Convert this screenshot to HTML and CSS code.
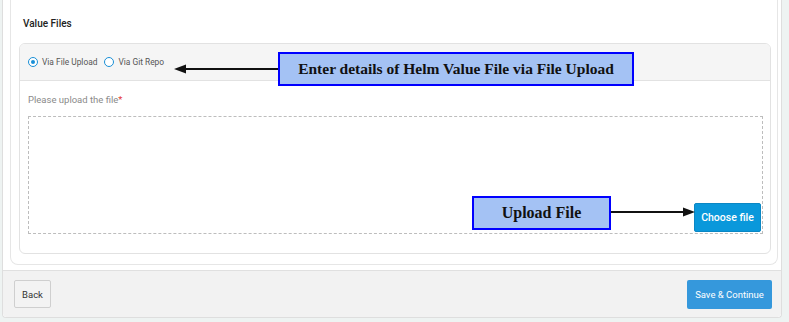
FILE: index.html
```html
<!DOCTYPE html>
<html lang="en">
  <head>
    <meta charset="UTF-8" />
    <title>Helm Value Files</title>
    <link rel="stylesheet" href="styles.css">
  </head>
  <body>
    <div class="page">
      <div class="wizard">
        <div class="panel">
          <h4 class="panel__title">Value Files</h4>
          <div class="card">
            <div class="card__head">
              <label class="radio"><span class="radio__dot radio__dot--on"></span>Via File Upload</label>
              <label class="radio"><span class="radio__dot"></span>Via Git Repo</label>
            </div>
            <div class="card__body">
              <p class="field-label">Please upload the file<span class="req">*</span></p>
              <div class="dropzone">
                <button class="btn-choose">Choose file</button>
              </div>
            </div>
          </div>
        </div>
        <div class="wizard__foot">
          <button class="btn-back">Back</button>
          <button class="btn-save">Save &amp; Continue</button>
        </div>
      </div>

      <!-- annotations laid over the screenshot -->
      <div class="note note--top">Enter details of Helm Value File via File Upload</div>
      <svg class="arrow arrow--top" width="106" height="10" viewBox="0 0 106 10">
        <line x1="104" y1="5" x2="10" y2="5" stroke="#111" stroke-width="2" />
        <polygon points="0,5 12,0.5 12,9.5" fill="#111" />
      </svg>
      <div class="note note--file">Upload File</div>
      <svg class="arrow arrow--file" width="84" height="10" viewBox="0 0 84 10">
        <line x1="0" y1="5" x2="72" y2="5" stroke="#111" stroke-width="2" />
        <polygon points="84,5 72,0.5 72,9.5" fill="#111" />
      </svg>
    </div>
  </body>
</html>
```

FILE: styles.css
```css
html {
  box-sizing: border-box;
}

*,
*::before,
*::after {
  margin: 0;
  padding: 0;
  box-sizing: inherit;
}

body {
  font-family: "Roboto", "Liberation Sans", sans-serif;
  background: #eef3f2;
  color: #333;
  height: 322px;
  overflow: hidden;
}

.page {
  position: relative;
  padding: 0 7px 0 2px;
}

.wizard {
  background: #fff;
  border: 1px solid #dedede;
  border-top: none;
  border-radius: 0 0 4px 4px;
  height: 318px;
  display: flex;
  flex-direction: column;
}

.panel {
  margin: 0 3px 0 7px;
  height: 265px;
  border: 1px solid #e6e6e6;
  border-top: none;
  border-radius: 0 0 8px 8px;
  padding: 17px 6px 0 8px;
}

.panel__title {
  font-size: 10px;
  font-weight: 500;
  color: #222;
  line-height: 14px;
  margin-left: 4px;
}

.card {
  margin-top: 12px;
  border: 1px solid #e2e2e2;
  border-radius: 6px;
  height: 211px;
  overflow: hidden;
}

.card__head {
  height: 37px;
  background: #f5f5f5;
  border-bottom: 1px solid #e2e2e2;
  display: flex;
  align-items: center;
  gap: 7px;
  padding-left: 8px;
}

.radio {
  display: flex;
  align-items: center;
  gap: 4px;
  font-size: 8.4px;
  color: #555;
}

.radio__dot {
  width: 10px;
  height: 10px;
  border: 1.5px solid #1a8fd6;
  border-radius: 50%;
  background: #fff;
  position: relative;
}

.radio__dot--on::after {
  content: "";
  position: absolute;
  left: 1.5px;
  top: 1.5px;
  width: 4px;
  height: 4px;
  border-radius: 50%;
  background: #1a8fd6;
}

.card__body {
  padding: 13px 7px 0 8px;
}

.field-label {
  font-size: 9.5px;
  color: #8a8a8a;
  line-height: 12px;
}

.req {
  color: #e53935;
}

.dropzone {
  margin-top: 10px;
  height: 118px;
  border: 1px dashed #bdbdbd;
  display: flex;
  justify-content: flex-end;
  align-items: flex-end;
  padding: 0 1px 1px 0;
}

.btn-choose {
  width: 67px;
  height: 29px;
  border: 1px solid #0b87c4;
  border-radius: 2px;
  background: #0a98db;
  color: #fff;
  font-family: inherit;
  font-size: 10.5px;
  font-weight: 500;
}

.wizard__foot {
  margin-top: auto;
  height: 47px;
  background: #f2f2f2;
  border-top: 1px solid #e0e0e0;
  border-radius: 0 0 4px 4px;
  display: flex;
  justify-content: space-between;
  align-items: center;
  padding: 0 9px 0 11px;
}

.btn-back {
  width: 37px;
  height: 28px;
  background: #f3f3f3;
  border: 1px solid #cfcfcf;
  border-radius: 2px;
  font-family: inherit;
  font-size: 9.5px;
  color: #333;
}

.btn-save {
  width: 85px;
  height: 29px;
  background: #3598dc;
  border: none;
  border-radius: 2px;
  color: #fff;
  font-family: inherit;
  font-size: 9.5px;
}

.note {
  position: absolute;
  background: #a4c2f4;
  border: 2px solid #0000ff;
  font-family: "Liberation Serif", "DejaVu Serif", serif;
  font-weight: bold;
  color: #111;
  display: flex;
  align-items: center;
  justify-content: center;
}

.note--top {
  left: 278px;
  top: 52px;
  width: 356px;
  height: 34px;
  font-size: 15.5px;
}

.note--file {
  left: 472px;
  top: 196px;
  width: 139px;
  height: 34px;
  font-size: 16px;
}

.arrow {
  position: absolute;
}

.arrow--top {
  left: 174px;
  top: 64px;
}

.arrow--file {
  left: 611px;
  top: 207px;
}
```
